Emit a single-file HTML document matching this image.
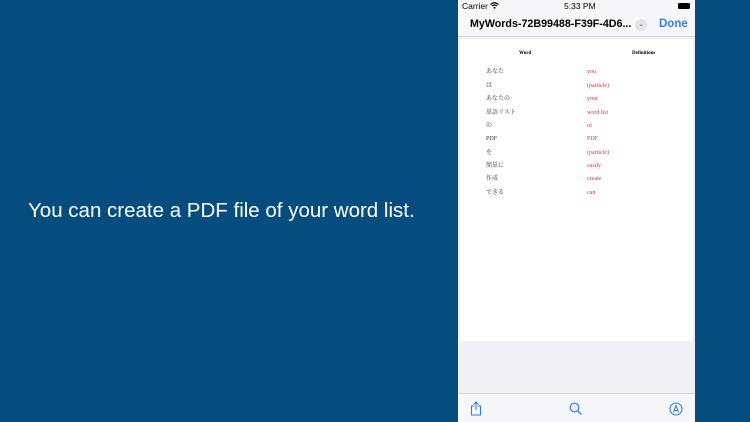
<!DOCTYPE html>
<html><head><meta charset="utf-8"><style>
*{margin:0;padding:0;box-sizing:border-box}
body{width:750px;height:422px;background:#044d7e;position:relative;overflow:hidden;font-family:"Liberation Sans","Noto Sans CJK JP",sans-serif}
.cap{position:absolute;left:28px;top:199px;color:#fff;font-size:20.5px;white-space:nowrap}
.ph{position:absolute;left:458px;top:0;width:237px;height:422px;background:#efeff4}
.top{position:absolute;left:0;top:0;width:237px;height:37px;background:#f7f7f9;border-bottom:1px solid #d8d8dc}
.page{position:absolute;left:2px;top:39px;width:233px;height:302px;background:#fff}
.bot{position:absolute;left:0;top:393px;width:237px;height:29px;background:#f7f7f9;border-top:1px solid #d8d8dc}
.t{position:absolute;white-space:nowrap;font-family:"Liberation Serif","Noto Serif CJK SC",serif;font-size:6px;line-height:8px;height:8px}
.l{left:26px;color:#333}.r{left:127px;color:#e33}
</style></head><body>
<div class="cap">You can create a PDF file of your word list.</div>
<div class="ph">
<div class="top">
<div style="position:absolute;left:4px;top:1px;font-size:8.5px">Carrier</div>
<svg style="position:absolute;left:32px;top:2px" width="9" height="7" viewBox="0 0 9 7"><path d="M0.5 2.5Q4.5-1 8.5 2.5M2 4Q4.5 2 7 4" stroke="#000" stroke-width="1.2" fill="none"/><circle cx="4.5" cy="5.8" r="1" fill="#000"/></svg>
<div style="position:absolute;left:106px;top:1px;font-size:8.5px">5:33 PM</div>
<div style="position:absolute;left:220px;top:3px;width:12px;height:6px;border:1px solid #000;border-radius:1.5px;background:#000"></div>
<div style="position:absolute;left:12px;top:18px;font-size:10.7px;font-weight:bold">MyWords-72B99488-F39F-4D6...</div>
<div style="position:absolute;left:177px;top:19px;width:12px;height:12px;border-radius:6px;background:#e4e4e8;font-size:7px;color:#666;text-align:center;line-height:12px">⌄</div>
<div style="position:absolute;left:201px;top:18px;font-size:11.5px;color:#2f7cf6;font-weight:bold">Done</div>
</div>
<div class="page">
<div class="t" style="left:59px;top:11px;font-weight:bold;font-size:5px">Word</div>
<div class="t" style="left:172px;top:11px;font-weight:bold;font-size:5px">Definitions</div>
<div class="t l" style="top:29px">あなた</div><div class="t r" style="top:29px">you</div>
<div class="t l" style="top:43px">は</div><div class="t r" style="top:43px">(particle)</div>
<div class="t l" style="top:56px">あなたの</div><div class="t r" style="top:56px">your</div>
<div class="t l" style="top:70px">単語リスト</div><div class="t r" style="top:70px">word list</div>
<div class="t l" style="top:83px">の</div><div class="t r" style="top:83px">of</div>
<div class="t l" style="top:96px">PDF</div><div class="t r" style="top:96px">PDF</div>
<div class="t l" style="top:110px">を</div><div class="t r" style="top:110px">(particle)</div>
<div class="t l" style="top:123px">簡単に</div><div class="t r" style="top:123px">easily</div>
<div class="t l" style="top:136px">作成</div><div class="t r" style="top:136px">create</div>
<div class="t l" style="top:150px">できる</div><div class="t r" style="top:150px">can</div>
</div>
<div class="bot">
<svg style="position:absolute;left:12px;top:7px" width="12" height="15" viewBox="0 0 12 15"><path d="M4 5H1.5V14H10.5V5H8M6 1V9M3.5 3.5L6 1L8.5 3.5" stroke="#2f7cf6" stroke-width="1.1" fill="none"/></svg>
<svg style="position:absolute;left:111px;top:8px" width="14" height="14" viewBox="0 0 14 14"><circle cx="5.5" cy="5.5" r="4.3" stroke="#2f7cf6" stroke-width="1.2" fill="none"/><path d="M8.7 8.7L12.5 12.5" stroke="#2f7cf6" stroke-width="1.4"/></svg>
<svg style="position:absolute;left:211px;top:8px" width="14" height="14" viewBox="0 0 14 14"><circle cx="7" cy="7" r="6" stroke="#2f7cf6" stroke-width="1.1" fill="none"/><path d="M4.5 10.5L7 3.5L9.5 10.5M5.3 8.5H8.7" stroke="#2f7cf6" stroke-width="1.1" fill="none"/></svg>
</div>
</div>
</body></html>
